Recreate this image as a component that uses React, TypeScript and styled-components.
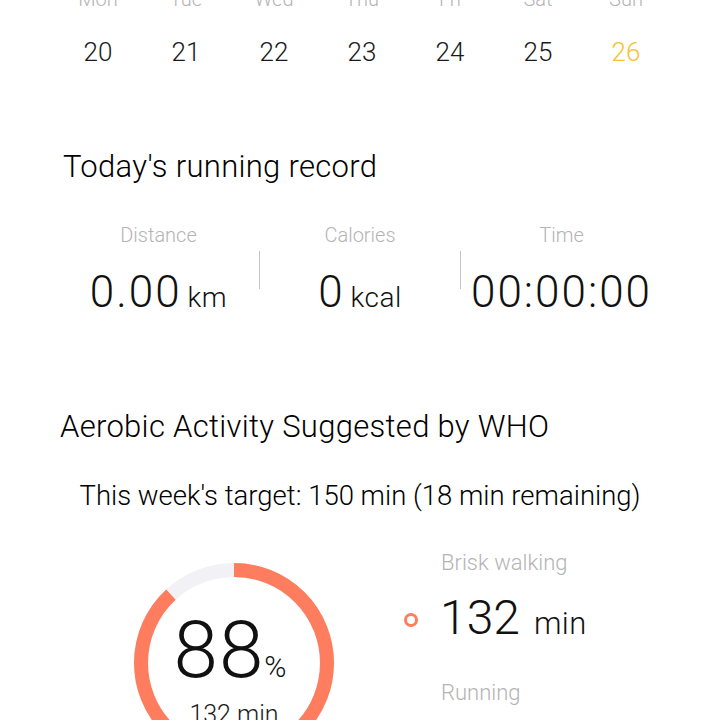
import styled, { createGlobalStyle } from "styled-components";

const GlobalStyle = createGlobalStyle`
  html, body {
    margin: 0;
    padding: 0;
    background: #ffffff;
  }
  body {
    font-family: Roboto, "Noto Sans", sans-serif;
    font-weight: 300;
    color: #111111;
    overflow: hidden;
  }
`;

const Page = styled.div`
  width: 720px;
  height: 720px;
  overflow: hidden;
`;

const Week = styled.div`
  display: grid;
  grid-template-columns: repeat(7, 88px);
  margin: -13px 0 0 54px;
  row-gap: 25px;
`;

const DayName = styled.div`
  text-align: center;
  font-size: 20px;
  line-height: 24px;
  color: #b4b4b4;
`;

const DayNum = styled.div<{ $today?: boolean }>`
  text-align: center;
  font-size: 26px;
  line-height: 32px;
  color: ${(p) => (p.$today ? "#f7c233" : "#1a1a1a")};
`;

const SectionTitle = styled.h2<{ $left: number; $top: number }>`
  margin: ${(p) => p.$top}px 0 0 ${(p) => p.$left}px;
  font-size: 31px;
  line-height: 36px;
  font-weight: 300;
  color: #000000;
  letter-spacing: 0.3px;
`;

const Stats = styled.div`
  display: grid;
  grid-template-columns: 201px 1px 200px 1px 201px;
  margin: 38px 0 0 58px;
`;

const Stat = styled.div`
  display: flex;
  flex-direction: column;
  align-items: center;
`;

const StatLabel = styled.div`
  font-size: 20px;
  line-height: 24px;
  color: #b4b4b4;
`;

const StatValue = styled.div`
  margin-top: 19px;
  font-size: 44px;
  line-height: 52px;
  letter-spacing: 2px;
  color: #111111;
  white-space: nowrap;
`;

const Unit = styled.span<{ $size: number; $gap: number }>`
  font-size: ${(p) => p.$size}px;
  margin-left: ${(p) => p.$gap}px;
  letter-spacing: 0.5px;
`;

const Divider = styled.div`
  width: 1px;
  height: 38px;
  margin-top: 28px;
  background: #c4c4c4;
`;

const Target = styled.div`
  margin-top: 35px;
  text-align: center;
  font-size: 27.5px;
  line-height: 32px;
  font-weight: 300;
  color: #000000;
`;

const Activity = styled.div`
  display: grid;
  grid-template-columns: 400px 1fr;
  margin-top: 36px;
`;

const RingWrap = styled.div`
  position: relative;
  margin: 15px 0 0 134px;
  width: 200px;
  height: 200px;
`;

const RingCenter = styled.div`
  position: absolute;
  inset: 0;
  display: flex;
  flex-direction: column;
  align-items: center;
  padding-top: 47px;
`;

const Percent = styled.div`
  font-size: 80px;
  line-height: 80px;
  letter-spacing: 1px;
  color: #111111;
  margin-left: -8px;
`;

const PercentSign = styled.span`
  font-size: 30px;
  letter-spacing: 0;
`;

const RingSub = styled.div`
  margin-top: -7px;
  font-size: 25px;
  line-height: 30px;
  color: #1a1a1a;
`;

const Legend = styled.div`
  display: flex;
  flex-direction: column;
  padding-top: 2px;
`;

const LegendLabel = styled.div<{ $gap: number }>`
  margin: ${(p) => p.$gap}px 0 0 41px;
  font-size: 22px;
  line-height: 26px;
  color: #b4b4b4;
`;

const LegendRow = styled.div`
  display: flex;
  align-items: center;
  margin-top: 14px;
`;

const Dot = styled.span`
  width: 8px;
  height: 8px;
  border-radius: 50%;
  border: 3px solid #fd7d5e;
  margin: -2px 0 0 4px;
`;

const LegendValue = styled.div`
  margin-left: 22px;
  font-size: 48px;
  line-height: 56px;
  color: #111111;
`;

function Ring({ percent }: { percent: number }) {
  const r = 93;
  const c = 2 * Math.PI * r;
  const done = (c * percent) / 100;
  return (
    <svg width="200" height="200" viewBox="0 0 200 200">
      <circle cx="100" cy="100" r={r} fill="none" stroke="#f1f1f6" strokeWidth="14" />
      <circle
        cx="100"
        cy="100"
        r={r}
        fill="none"
        stroke="#fd7d5e"
        strokeWidth="14"
        strokeDasharray={`${done} ${c}`}
        transform="rotate(-90 100 100)"
      />
    </svg>
  );
}

const days = [
  ["Mon", "20"],
  ["Tue", "21"],
  ["Wed", "22"],
  ["Thu", "23"],
  ["Fri", "24"],
  ["Sat", "25"],
  ["Sun", "26"],
];

export default function App() {
  return (
    <Page>
      <GlobalStyle />
      <Week>
        {days.map(([d]) => (
          <DayName key={d}>{d}</DayName>
        ))}
        {days.map(([d, n]) => (
          <DayNum key={n} $today={d === "Sun"}>
            {n}
          </DayNum>
        ))}
      </Week>

      <SectionTitle $left={63} $top={81}>Today's running record</SectionTitle>
      <Stats>
        <Stat>
          <StatLabel>Distance</StatLabel>
          <StatValue>
            0.00<Unit $size={28} $gap={6}>km</Unit>
          </StatValue>
        </Stat>
        <Divider />
        <Stat>
          <StatLabel>Calories</StatLabel>
          <StatValue>
            0<Unit $size={28} $gap={6}>kcal</Unit>
          </StatValue>
        </Stat>
        <Divider />
        <Stat>
          <StatLabel>Time</StatLabel>
          <StatValue>00:00:00</StatValue>
        </Stat>
      </Stats>

      <SectionTitle $left={60} $top={85}>Aerobic Activity Suggested by WHO</SectionTitle>
      <Target>This week's target: 150 min (18 min remaining)</Target>

      <Activity>
        <RingWrap>
          <Ring percent={88} />
          <RingCenter>
            <Percent>
              88<PercentSign>%</PercentSign>
            </Percent>
            <RingSub>132 min</RingSub>
          </RingCenter>
        </RingWrap>
        <Legend>
          <LegendLabel $gap={0}>Brisk walking</LegendLabel>
          <LegendRow>
            <Dot />
            <LegendValue>
              132<Unit $size={31} $gap={14}>min</Unit>
            </LegendValue>
          </LegendRow>
          <LegendLabel $gap={28}>Running</LegendLabel>
        </Legend>
      </Activity>
    </Page>
  );
}
